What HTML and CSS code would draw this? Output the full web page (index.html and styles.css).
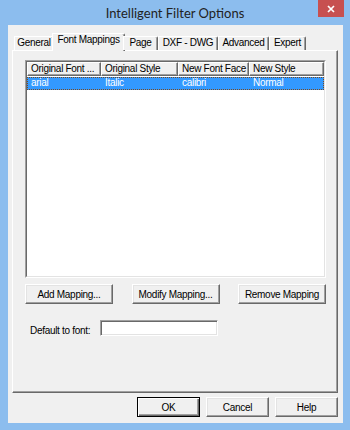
FILE: index.html
```html
<!DOCTYPE html>
<html>
<head>
<meta charset="utf-8">
<link rel="stylesheet" href="styles.css">
</head>
<body>
<div class="window">
  <div class="titlebar">
    <div></div>
    <div class="title">Intelligent Filter Options</div>
    <div class="close"><svg width="8" height="8" viewBox="0 0 8 8"><path d="M1 1L7 7M7 1L1 7" stroke="#fff" stroke-width="1.7"/></svg></div>
  </div>
  <div class="client">
    <div class="tabs">
      <div class="tab tab-general">General</div>
      <div class="tab tab-fonts active">Font Mappings</div>
      <div class="tab tab-page">Page</div>
      <div class="tab tab-dxf">DXF - DWG</div>
      <div class="tab tab-adv">Advanced</div>
      <div class="tab tab-expert">Expert</div>
    </div>
    <div class="panel">
      <div class="list">
        <div class="list-inner">
          <div class="lv-head">
            <div class="hc c1">Original Font ...</div>
            <div class="hc c2">Original Style</div>
            <div class="hc c3">New Font Face</div>
            <div class="hc c4">New Style</div>
          </div>
          <div class="lv-row selected">
            <div class="cell c1">arial</div>
            <div class="cell c2">Italic</div>
            <div class="cell c3">calibri</div>
            <div class="cell c4">Normal</div>
          </div>
        </div>
      </div>
      <div class="btn-row">
        <div class="btn wide">Add Mapping...</div>
        <div class="btn wide">Modify Mapping...</div>
        <div class="btn wide">Remove Mapping</div>
      </div>
      <div class="field-row">
        <span class="label">Default to font:</span>
        <div class="textbox"></div>
      </div>
    </div>
    <div class="footer">
      <div class="btn small default">OK</div>
      <div class="btn small">Cancel</div>
      <div class="btn small">Help</div>
    </div>
  </div>
</div>
</body>
</html>
```
FILE: styles.css
```css
html, body {
  margin: 0;
  padding: 0;
  overflow: hidden;
}
.window {
  width: 350px;
  height: 430px;
  box-sizing: border-box;
  background: #8cbdee;
  padding: 0 7px 7px 8px;
  display: flex;
  flex-direction: column;
  font-family: "Liberation Sans", Arial, sans-serif;
  font-size: 10px;
  letter-spacing: -0.3px;
  color: #000;
}
.titlebar {
  height: 25px;
  flex: none;
  margin: 0 -7px 0 -8px;
  display: grid;
  grid-template-columns: 1fr auto 1fr;
  align-items: start;
}
.title {
  font-family: Lato, "Liberation Sans", sans-serif;
  font-size: 13px;
  letter-spacing: 0;
  line-height: 26px;
  color: #222;
  white-space: nowrap;
}
.close {
  justify-self: end;
  margin-right: 6px;
  width: 26px;
  height: 17px;
  background: #c75050;
  display: flex;
  align-items: center;
  justify-content: center;
}
.client {
  flex: 1;
  background: #f0f0f0;
  padding: 8px 5px 0 4px;
  display: flex;
  flex-direction: column;
}
.tabs {
  display: flex;
  align-items: flex-end;
  height: 17px;
  flex: none;
  padding-left: 2px;
  position: relative;
  z-index: 1;
}
.tab {
  box-sizing: border-box;
  height: 14px;
  border: 1px solid;
  border-bottom: none;
  border-color: #fff #696969 #fff #fff;
  box-shadow: inset -1px 0 0 #a0a0a0;
  border-top-right-radius: 2px;
  line-height: 12px;
  text-align: center;
  white-space: nowrap;
  background: #f0f0f0;
}
.tab.active {
  height: 18px;
  margin: 0 -2px -1px;
  padding-bottom: 5px;
}
.tab-general { width: 40px; }
.tab-fonts { width: 73px; }
.tab-page { width: 35px; }
.tab-dxf { width: 60px; }
.tab-adv { width: 51px; }
.tab-expert { width: 37px; }
.panel {
  height: 343px;
  flex: none;
  box-sizing: border-box;
  border: 1px solid;
  border-color: #fff #696969 #696969 #fff;
  box-shadow: inset -1px -1px 0 #a0a0a0;
  padding: 9px 0 0 12px;
}
.list {
  width: 301px;
  height: 218px;
  box-sizing: border-box;
  border: 1px solid;
  border-color: #a0a0a0 #fff #fff #a0a0a0;
}
.list-inner {
  height: 100%;
  box-sizing: border-box;
  border: 1px solid;
  border-color: #696969 #e3e3e3 #e3e3e3 #696969;
  background: #fff;
}
.lv-head {
  display: flex;
  height: 14px;
}
.hc {
  box-sizing: border-box;
  height: 14px;
  border: 1px solid;
  border-color: #fff #696969 #696969 #fff;
  box-shadow: inset -1px -1px 0 #a0a0a0;
  padding: 0 3px;
  line-height: 12px;
  white-space: nowrap;
  overflow: hidden;
  background: #f0f0f0;
}
.c1 { width: 74px; }
.c2 { width: 77px; }
.c3 { width: 71px; }
.c4 { width: 75px; }
.lv-row {
  display: flex;
  height: 13px;
  margin-top: 1px;
}
.lv-row.selected {
  background: #3399ff;
  color: #fff;
  outline: 1px dotted #7a4a20;
  outline-offset: -1px;
}
.cell {
  box-sizing: border-box;
  padding-left: 4px;
  line-height: 12px;
  white-space: nowrap;
}
.btn {
  box-sizing: border-box;
  height: 20px;
  border: 1px solid;
  border-color: #fff #696969 #696969 #fff;
  box-shadow: inset -1px -1px 0 #a0a0a0, inset 1px 1px 0 #e3e3e3;
  background: #f0f0f0;
  display: flex;
  align-items: center;
  justify-content: center;
  white-space: nowrap;
}
.btn.wide { width: 88px; }
.btn.small { width: 63px; }
.btn.default {
  border-color: #000;
  box-shadow: inset 1px 1px 0 #fff, inset -1px -1px 0 #696969, inset -2px -2px 0 #a0a0a0;
}
.btn-row {
  display: flex;
  justify-content: space-between;
  width: 301px;
  margin-top: 6px;
}
.field-row {
  display: flex;
  align-items: flex-start;
  margin-top: 16px;
}
.label {
  width: 75px;
  box-sizing: border-box;
  padding: 5px 0 0 5px;
  line-height: 12px;
  white-space: nowrap;
}
.textbox {
  width: 118px;
  height: 16px;
  box-sizing: border-box;
  border: 1px solid;
  border-color: #a0a0a0 #fff #fff #a0a0a0;
  box-shadow: inset 1px 1px 0 #696969, inset -1px -1px 0 #e3e3e3;
  background: #fff;
}
.footer {
  display: flex;
  justify-content: flex-end;
  gap: 6px;
  margin-top: 4px;
}
```
